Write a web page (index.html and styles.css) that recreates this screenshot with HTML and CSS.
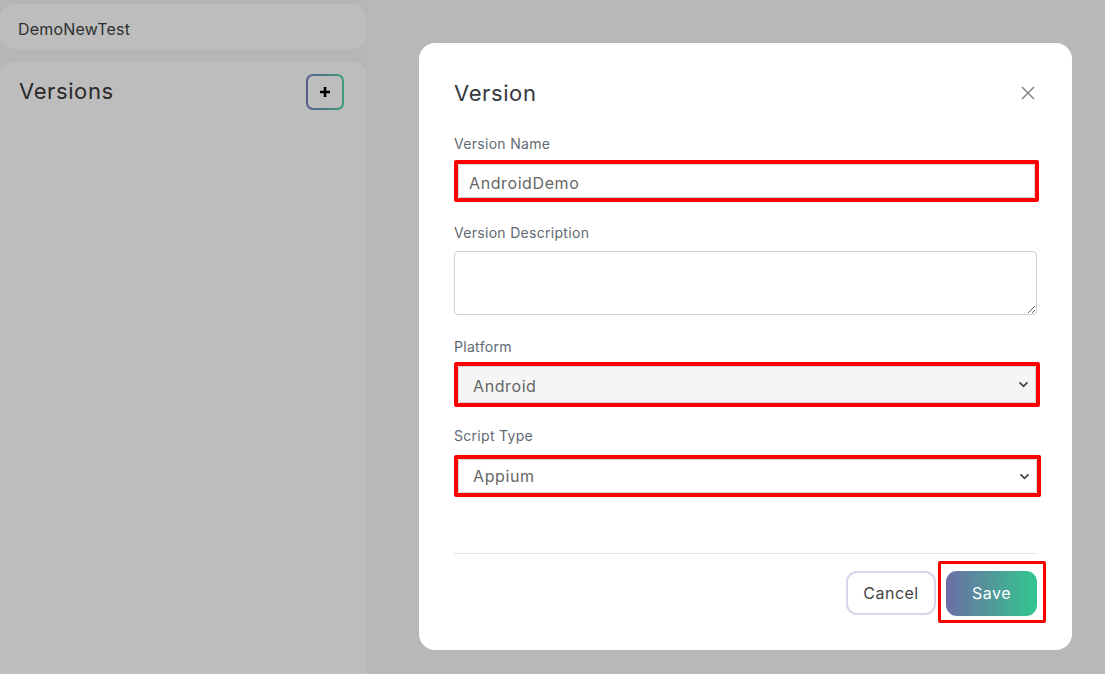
FILE: index.html
```html
<!DOCTYPE html>
<html>
<head>
    <meta content="text/html; charset=utf-8" http-equiv="Content-Type">
    <title>Versions</title>
    <link rel="stylesheet" href="styles.css">
</head>

<body>
    <div class="sidebar">
        <div class="project-card">DemoNewTest</div>
        <div class="versions-card">
            <div class="versions-header">
                <h2>Versions</h2>
                <button class="add-button" title="Add version">
                    <svg width="12" height="12" viewBox="0 0 12 12">
                        <path d="M6 1v10M1 6h10" stroke="#000" stroke-width="2.6"/>
                    </svg>
                </button>
            </div>
        </div>
    </div>

    <div class="main"></div>

    <!-- Version modal -->
    <div class="modal">
        <div class="modal-header">
            <h3>Version</h3>
            <button class="close-button" title="Close">
                <svg width="14" height="14" viewBox="0 0 14 14">
                    <path d="M1 1l12 12M13 1L1 13" stroke="#8a8a8a" stroke-width="1.6"/>
                </svg>
            </button>
        </div>

        <label class="field-label" for="versionName">Version Name</label>
        <div class="mark mark-name">
            <input id="versionName" class="field-input" type="text" value="AndroidDemo">
        </div>

        <label class="field-label label-desc" for="versionDesc">Version Description</label>
        <textarea id="versionDesc" class="field-textarea"></textarea>

        <label class="field-label label-platform" for="platform">Platform</label>
        <div class="mark mark-platform">
            <select id="platform" class="field-select disabled">
                <option>Android</option>
            </select>
        </div>

        <label class="field-label label-script" for="scriptType">Script Type</label>
        <div class="mark mark-script">
            <select id="scriptType" class="field-select">
                <option>Appium</option>
            </select>
        </div>

        <div class="modal-footer">
            <button class="cancel-button">Cancel</button>
            <div class="mark mark-save">
                <button class="save-button">Save</button>
            </div>
        </div>
    </div>
</body>
</html>
```

FILE: styles.css
```css
body {
    font-family: Inter, "Noto Sans", sans-serif;
    margin: 0;
    height: 100vh;
    overflow: hidden;
    background: #b6b6b6;
    display: flex;
    color: #333;
}

/* Left column */
.sidebar {
    width: 367px;
    display: flex;
    flex-direction: column;
    gap: 13px;
    padding-top: 4px;
    box-sizing: border-box;
}

.project-card {
    height: 45px;
    box-sizing: border-box;
    background: #bdbdbd;
    border-radius: 14px;
    padding: 4px 0 0 18px;
    display: flex;
    align-items: center;
    font-size: 16px;
    letter-spacing: 0.2px;
    color: #2f2f2f;
    margin-right: 1px;
}

.versions-card {
    flex: 1;
    background: #bdbdbd;
    border-radius: 14px 14px 0 0;
    padding: 12px 23px 0 19px;
}

.versions-header {
    display: flex;
    justify-content: space-between;
    align-items: center;
}

.versions-header h2 {
    margin: 0 0 2px 0;
    font-size: 22px;
    font-weight: 400;
    letter-spacing: 0.6px;
    color: #2a2a2a;
}

.add-button {
    width: 38px;
    height: 36px;
    border: 2px solid transparent;
    border-radius: 7px;
    background: linear-gradient(#bdbdbd, #bdbdbd) padding-box,
                linear-gradient(90deg, #575b8c, #3a9d7a) border-box;
    display: flex;
    align-items: center;
    justify-content: center;
    padding: 0;
}

.main {
    flex: 1;
    background: #b8b8b8;
}

/* Modal */
.modal {
    position: absolute;
    left: 419px;
    top: 43px;
    width: 653px;
    height: 607px;
    box-sizing: border-box;
    background: #fff;
    border-radius: 16px;
    padding: 36px 35px 0 35px;
    display: flex;
    flex-direction: column;
}

.modal-header {
    display: flex;
    justify-content: space-between;
    align-items: center;
    height: 28px;
    margin-bottom: 27px;
}

.modal-header h3 {
    margin: 0;
    font-size: 22px;
    font-weight: 400;
    letter-spacing: 0.6px;
    color: #34393e;
}

.close-button {
    background: none;
    border: none;
    padding: 0;
    margin-right: 2px;
    display: flex;
}

.field-label {
    font-size: 14px;
    line-height: 20px;
    color: #5f6a73;
    letter-spacing: 0.3px;
}

.label-desc {
    margin-top: 21px;
}

.label-platform {
    margin-top: 22px;
}

.label-script {
    margin-top: 19px;
}

/* red highlight round a field */
.mark {
    border: 4px solid #ff0000;
    border-radius: 2px;
    margin-top: 6px;
    display: flex;
}

.mark-name {
    width: 585px;
    box-sizing: border-box;
}

.mark-platform {
    width: 586px;
    box-sizing: border-box;
    margin-top: 5px;
}

.mark-script {
    width: 587px;
    box-sizing: border-box;
    margin-top: 9px;
}

.field-input,
.field-select {
    flex: 1;
    border: 1px solid #d4d4d4;
    border-radius: 2px;
    font-family: inherit;
    font-size: 16px;
    letter-spacing: 0.6px;
    color: #666;
    background: #fff;
    outline: none;
}

.field-input {
    height: 34px;
    box-sizing: border-box;
    padding: 3px 10px 0 10px;
}

.field-select {
    appearance: none;
    -webkit-appearance: none;
    padding: 0 14px;
    background-image: url("data:image/svg+xml,%3Csvg xmlns='http://www.w3.org/2000/svg' width='12' height='8' viewBox='0 0 12 8'%3E%3Cpath d='M1.5 1.5l4.5 4.5 4.5-4.5' fill='none' stroke='%23444' stroke-width='2'/%3E%3C/svg%3E");
    background-repeat: no-repeat;
    background-position: right 6px center;
    background-size: 11px 7px;
}

.mark-platform .field-select {
    height: 37px;
    padding-top: 3px;
}

.mark-script .field-select {
    height: 34px;
}

.field-select.disabled {
    background-color: #f5f5f5;
}

.field-textarea {
    margin-top: 8px;
    width: 583px;
    height: 64px;
    box-sizing: border-box;
    border: 1px solid #cdd1d5;
    border-radius: 4px;
    font-family: inherit;
    font-size: 16px;
    resize: vertical;
}

.modal-footer {
    margin-top: 56px;
    border-top: 1px solid #e3e3e3;
    padding-top: 7px;
    display: flex;
    justify-content: flex-end;
    align-items: flex-start;
    gap: 2px;
}

.cancel-button {
    width: 90px;
    height: 44px;
    margin-top: 10px;
    border: 2px solid #d8d6ea;
    border-radius: 11px;
    background: #fff;
    font-family: inherit;
    font-size: 16px;
    letter-spacing: 0.5px;
    color: #444;
}

.mark-save {
    margin-top: 0;
    margin-right: -9px;
    border-width: 3px;
    padding: 7px 6px 4px 5px;
}

.save-button {
    width: 91px;
    height: 45px;
    padding-bottom: 2px;
    border: none;
    border-radius: 11px;
    background: linear-gradient(90deg, #6c6ea6, #32c68f);
    font-family: inherit;
    font-size: 16px;
    letter-spacing: 0.5px;
    color: #fff;
}
```
